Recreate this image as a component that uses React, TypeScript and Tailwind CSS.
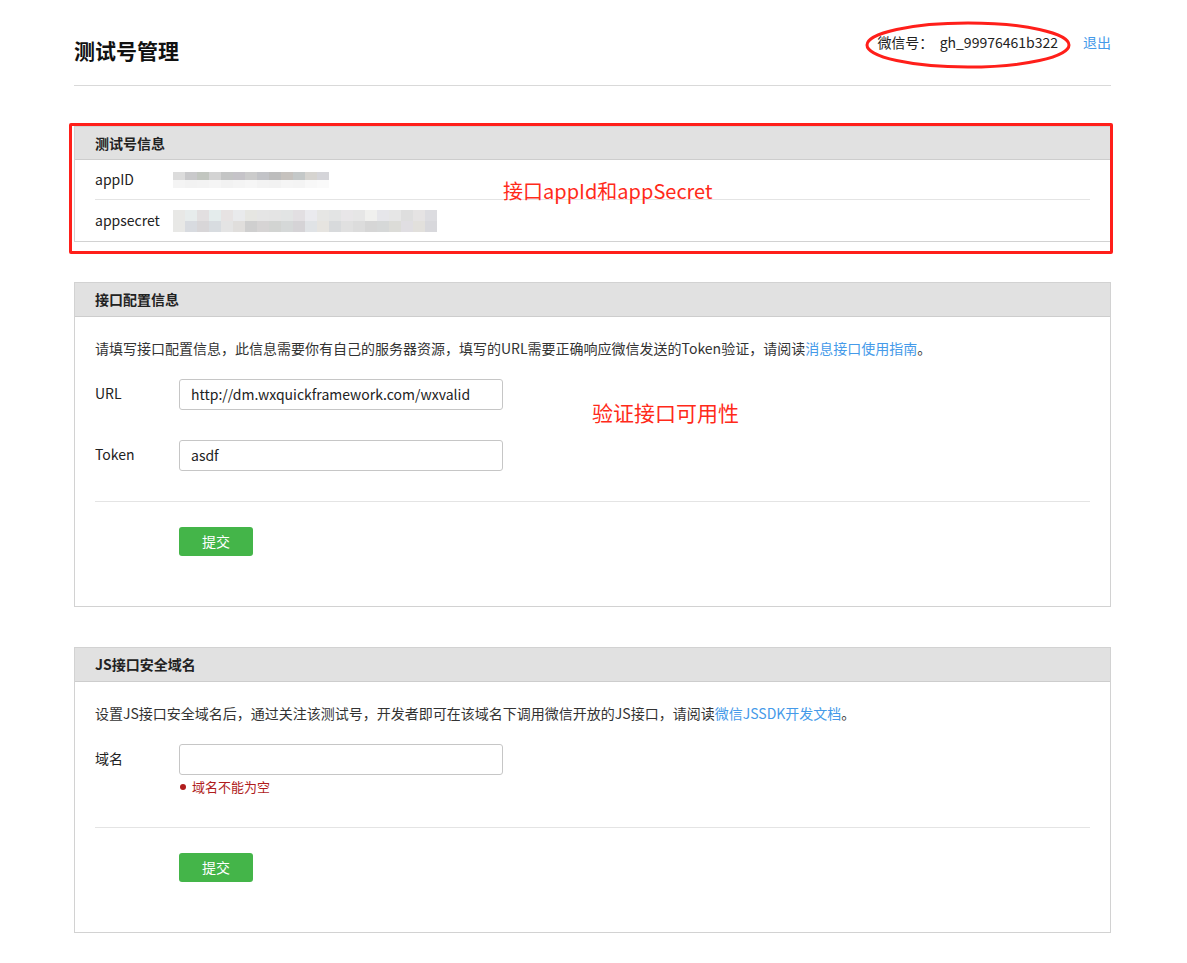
import React from 'react';

const FONT = '"Noto Sans CJK SC", sans-serif';

const APPID_TOP = ['#dcdcdc', '#c9c9cb', '#c2c6c0', '#d3d3d3', '#c4c5c5', '#c5c3c8', '#cbcbcb', '#c2c3c7', '#bdbdbd', '#c6c2be', '#c4c8c8', '#d6d4d0', '#d5d5d9'];
const APPID_BOTTOM = ['#f4f4f4', '#f2f2f2', '#f3f3f3', '#f5f5f5', '#f2f2f2', '#f4f4f4', '#f6f6f6', '#f3f3f3', '#f2f2f2', '#f5f5f5', '#f4f4f4', '#f8f8f8', '#fafafa'];
const SECRET_TOP = ['#e8e8e6', '#e7ecec', '#e2dfe0', '#e4ecec', '#e7e3e3', '#e9eaec', '#e6e6e2', '#e5e5e5', '#e4e4e4', '#e2e4e4', '#e2dfe2', '#eaeaee', '#e6e6e4', '#e3e4e4', '#e8e6e8', '#e6e6e6', '#f0f0ee', '#e6e6ea', '#e6e6e6', '#dedede', '#e5e3e3', '#dcdce0'];
const SECRET_BOTTOM = ['#e8e8e6', '#d8dbe0', '#d8d6d8', '#d8dce0', '#e4e4e4', '#e0dedc', '#cfcfcf', '#d6d4d4', '#d2d4d2', '#d5d8d8', '#d5d3d6', '#e0e3e6', '#e6e4e0', '#d8dadc', '#e0e0e0', '#dcdcdc', '#d6d6d6', '#d6d8d8', '#dcdcd8', '#e0dee2', '#e2e0dc', '#d8d8dc'];

// pixelated (blurred) secret value
function Mosaic({ top, bottom, rowH }: { top: string[]; bottom: string[]; rowH: number }) {
  const w = top.length * 12;
  return (
    <svg width={w} height={rowH * 2} viewBox={`0 0 ${w} ${rowH * 2}`}>
      {top.map((c, i) => (
        <rect key={`t${i}`} x={i * 12} y={0} width={12} height={rowH} fill={c} />
      ))}
      {bottom.map((c, i) => (
        <rect key={`b${i}`} x={i * 12} y={rowH} width={12} height={rowH} fill={c} />
      ))}
    </svg>
  );
}

function PanelHeader({ title, short }: { title: string; short?: boolean }) {
  return (
    <div
      className={
        short
          ? 'h-[33px] bg-[#e1e1e1] border-b border-[#cdcdcd] px-[20px] flex items-center'
          : 'h-[34px] bg-[#e1e1e1] border-b border-[#cdcdcd] px-[20px] flex items-center'
      }
    >
      <span className="text-[14px] font-bold text-[#222]">{title}</span>
    </div>
  );
}

function Field({ label, value, error }: { label: string; value: string; error?: string }) {
  return (
    <div className="flex">
      <div className="w-[84px] pt-[4px] text-[14px] leading-[20px] text-[#222]">{label}</div>
      <div>
        <div className="w-[324px] h-[31px] border border-[#c6c6c6] rounded-[3px] px-[11px] flex items-center text-[14px] text-[#222]">
          {value}
        </div>
        {error && (
          <div className="flex items-center gap-[6px] mt-[2px] pl-[1px] text-[13px] leading-[20px] text-[#b01c1c]">
            <span className="w-[6px] h-[6px] rounded-full bg-[#b01c1c]"></span>
            {error}
          </div>
        )}
      </div>
    </div>
  );
}

function SubmitRow() {
  return (
    <div className="mx-[20px] border-t border-[#e4e4e4] pt-[25px] pb-[50px]">
      <button className="ml-[84px] w-[74px] h-[29px] rounded-[3px] bg-[#44b549] text-white text-[14px] flex items-center justify-center">
        提交
      </button>
    </div>
  );
}

export default function App() {
  return (
    <div className="min-h-[963px] bg-white" style={{ fontFamily: FONT }}>
      <div className="w-[1037px] ml-[74px] pb-[30px]">
        {/* page header */}
        <div className="relative h-[86px] border-b border-[#d9d9d9] flex justify-between">
          <h1 className="pt-[36px] text-[21px] leading-[28px] font-bold text-[#111]">测试号管理</h1>
          <div className="pt-[32px] flex items-start text-[14px] leading-[20px]">
            <span className="text-[#222]">微信号：&nbsp;&nbsp;gh_99976461b322</span>
            <a className="ml-[25px] text-[#459ae9]">退出</a>
          </div>
          <svg className="absolute left-[791px] top-[21px]" width="206" height="48" viewBox="0 0 206 48">
            <ellipse cx="103" cy="24" rx="101" ry="22" fill="none" stroke="#ff1f1a" strokeWidth="3" />
          </svg>
        </div>

        {/* 测试号信息 */}
        <div className="relative mt-[40px]">
          <div className="border border-[#d2d2d2]">
            <PanelHeader title="测试号信息" short />
            <div className="px-[20px]">
              <div className="h-[40px] flex items-center border-b border-[#e4e4e4] text-[14px] text-[#222]">
                <span className="w-[78px]">appID</span>
                <Mosaic top={APPID_TOP} bottom={APPID_BOTTOM} rowH={8} />
              </div>
              <div className="h-[41px] flex items-center text-[14px] text-[#222]">
                <span className="w-[78px]">appsecret</span>
                <Mosaic top={SECRET_TOP} bottom={SECRET_BOTTOM} rowH={11} />
              </div>
            </div>
          </div>
          <div className="absolute -left-[5px] -right-[2px] -top-[3px] -bottom-[12px] border-[3px] border-[#ff1f1a] rounded-[2px] pointer-events-none"></div>
          <div className="absolute left-[429px] top-[53px] text-[20px] leading-[24px] text-[#ff2a1a] font-normal">
            接口appId和appSecret
          </div>
        </div>

        {/* 接口配置信息 */}
        <div className="relative mt-[40px] border border-[#d2d2d2]">
          <PanelHeader title="接口配置信息" />
          <div className="px-[20px] pt-[21px] text-[14px] leading-[20px] text-[#333]">
            请填写接口配置信息，此信息需要你有自己的服务器资源，填写的URL需要正确响应微信发送的Token验证，请阅读
            <a className="text-[#459ae9]">消息接口使用指南</a>。
          </div>
          <div className="px-[20px] pt-[21px] flex flex-col gap-[30px]">
            <Field label="URL" value="http://dm.wxquickframework.com/wxvalid" />
            <Field label="Token" value="asdf" />
          </div>
          <div className="h-[30px]"></div>
          <SubmitRow />
          <div className="absolute left-[517px] top-[117px] text-[21px] leading-[24px] text-[#ff2a1a]">验证接口可用性</div>
        </div>

        {/* JS接口安全域名 */}
        <div className="mt-[40px] border border-[#d2d2d2]">
          <PanelHeader title="JS接口安全域名" />
          <div className="px-[20px] pt-[21px] text-[14px] leading-[20px] text-[#333]">
            设置JS接口安全域名后，通过关注该测试号，开发者即可在该域名下调用微信开放的JS接口，请阅读
            <a className="text-[#459ae9]">微信JSSDK开发文档</a>。
          </div>
          <div className="px-[20px] pt-[21px]">
            <Field label="域名" value="" error="域名不能为空" />
          </div>
          <div className="h-[30px]"></div>
          <SubmitRow />
        </div>
      </div>
    </div>
  );
}
